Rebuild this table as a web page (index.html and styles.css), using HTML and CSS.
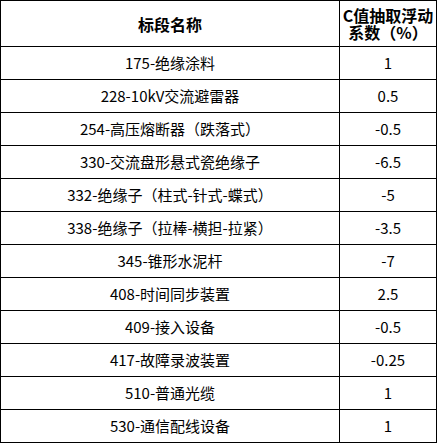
FILE: index.html
```html
<!DOCTYPE html>
<html lang="zh-CN">
<head>
<meta charset="utf-8">
<link rel="stylesheet" href="styles.css">
</head>
<body>
<table class="grid">
  <thead>
    <tr class="head-row">
      <th class="name-col">标段名称</th>
      <th class="val-col"><span class="line">C值抽取浮动</span><span class="line">系数（%）</span></th>
    </tr>
  </thead>
  <tbody>
    <tr><td>175-绝缘涂料</td><td>1</td></tr>
    <tr><td>228-10kV交流避雷器</td><td>0.5</td></tr>
    <tr><td>254-高压熔断器（跌落式）</td><td>-0.5</td></tr>
    <tr><td>330-交流盘形悬式瓷绝缘子</td><td>-6.5</td></tr>
    <tr><td>332-绝缘子（柱式-针式-蝶式）</td><td>-5</td></tr>
    <tr><td>338-绝缘子（拉棒-横担-拉紧）</td><td>-3.5</td></tr>
    <tr><td>345-锥形水泥杆</td><td>-7</td></tr>
    <tr><td>408-时间同步装置</td><td>2.5</td></tr>
    <tr><td>409-接入设备</td><td>-0.5</td></tr>
    <tr><td>417-故障录波装置</td><td>-0.25</td></tr>
    <tr><td>510-普通光缆</td><td>1</td></tr>
    <tr><td>530-通信配线设备</td><td>1</td></tr>
  </tbody>
</table>
</body>
</html>
```

FILE: styles.css
```css
html, body {
  margin: 0;
  padding: 0;
  background: #fff;
}
.grid {
  border-collapse: collapse;
  width: 437px;
  table-layout: fixed;
  font-family: "Noto Sans CJK SC", sans-serif;
  color: #000;
}
.grid th, .grid td {
  border: 1px solid #000;
  text-align: center;
  vertical-align: middle;
  padding: 0;
}
.name-col {
  width: 338px;
}
.head-row {
  height: 46px;
}
.grid th {
  font-size: 16px;
  font-weight: bold;
  line-height: 18px;
}
.line {
  display: block;
  height: 17px;
  line-height: 17px;
  overflow: visible;
}
.val-col {
  padding-top: 2px;
}
.grid tbody tr {
  height: 33px;
}
.grid td {
  font-size: 15px;
  line-height: 18px;
}
```
